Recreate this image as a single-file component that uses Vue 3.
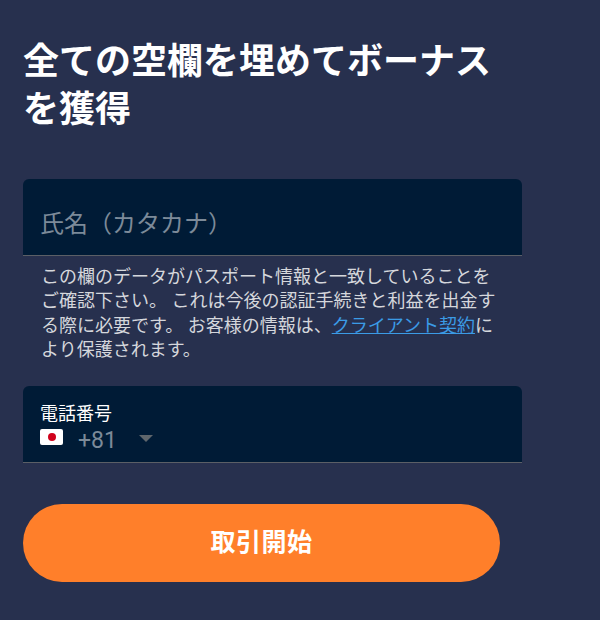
<template>
  <div class="page">
    <h1 class="title">全ての空欄を埋めてボーナスを獲得</h1>

    <!-- Name -->
    <div class="field name-field">
      <span class="placeholder">氏名（カタカナ）</span>
    </div>
    <p class="hint">
      この欄のデータがパスポート情報と一致していることをご確認下さい。 これは今後の認証手続きと利益を出金する際に必要です。 お客様の情報は、<a class="link" href="#">クライアント契約</a>により保護されます。
    </p>

    <!-- Phone -->
    <div class="field phone-field">
      <span class="phone-label">電話番号</span>
      <div class="phone-row">
        <span class="flag"><span class="flag-dot"></span></span>
        <span class="code">+81</span>
        <span class="caret"></span>
      </div>
    </div>

    <button class="submit">取引開始</button>
  </div>
</template>

<script setup>
</script>

<style>
html, body {
  background: #27304e;
}
</style>

<style scoped>
.page {
  width: 600px;
  height: 620px;
  box-sizing: border-box;
  padding: 38px 78px 0 23px;
  background: #27304e;
  font-family: "Roboto", "Noto Sans CJK JP", sans-serif;
  color: #fff;
}

.title {
  margin: 0 0 45px;
  width: 480px;
  font-size: 36px;
  line-height: 48px;
  font-weight: 700;
}

.field {
  box-sizing: border-box;
  width: 499px;
  background: #001b36;
  border-radius: 6px 6px 0 0;
  border-bottom: 1px solid #5b5f66;
}

.name-field {
  height: 77px;
  padding: 28px 18px 0;
}

.placeholder {
  display: block;
  margin-left: -1px;
  font-size: 24px;
  line-height: 34px;
  color: #7c8a99;
}

.hint {
  margin: 9px 0 23px;
  padding: 0 19px 0 18px;
  width: 499px;
  box-sizing: border-box;
  font-size: 18px;
  line-height: 24.4px;
  color: #d5d7dc;
}

.link {
  color: #3b9be6;
  text-decoration: underline;
}

.phone-field {
  height: 77px;
  padding: 16px 17px 0;
}

.phone-label {
  display: block;
  font-size: 18px;
  line-height: 24px;
  color: #fff;
}

.phone-row {
  display: flex;
  align-items: center;
  height: 26px;
  margin-top: -2px;
}

.flag {
  width: 23px;
  height: 16px;
  background: #fff;
  border-radius: 2px;
  display: flex;
  align-items: center;
  justify-content: center;
}

.flag-dot {
  width: 8px;
  height: 8px;
  background: #d0021b;
  border-radius: 50%;
}

.code {
  margin: 8px 0 0 15px;
  font-size: 23px;
  line-height: 26px;
  color: #7c8a99;
}

.caret {
  margin: 3px 0 0 22px;
  width: 0;
  height: 0;
  border-left: 7px solid transparent;
  border-right: 7px solid transparent;
  border-top: 7px solid #5f666c;
}

.submit {
  display: block;
  width: 477px;
  height: 78px;
  margin-top: 41px;
  padding-bottom: 7px;
  border: none;
  border-radius: 39px;
  background: #ff7f2a;
  color: #fff;
  font-family: inherit;
  font-size: 25px;
  font-weight: 700;
  letter-spacing: 0.5px;
}
</style>
